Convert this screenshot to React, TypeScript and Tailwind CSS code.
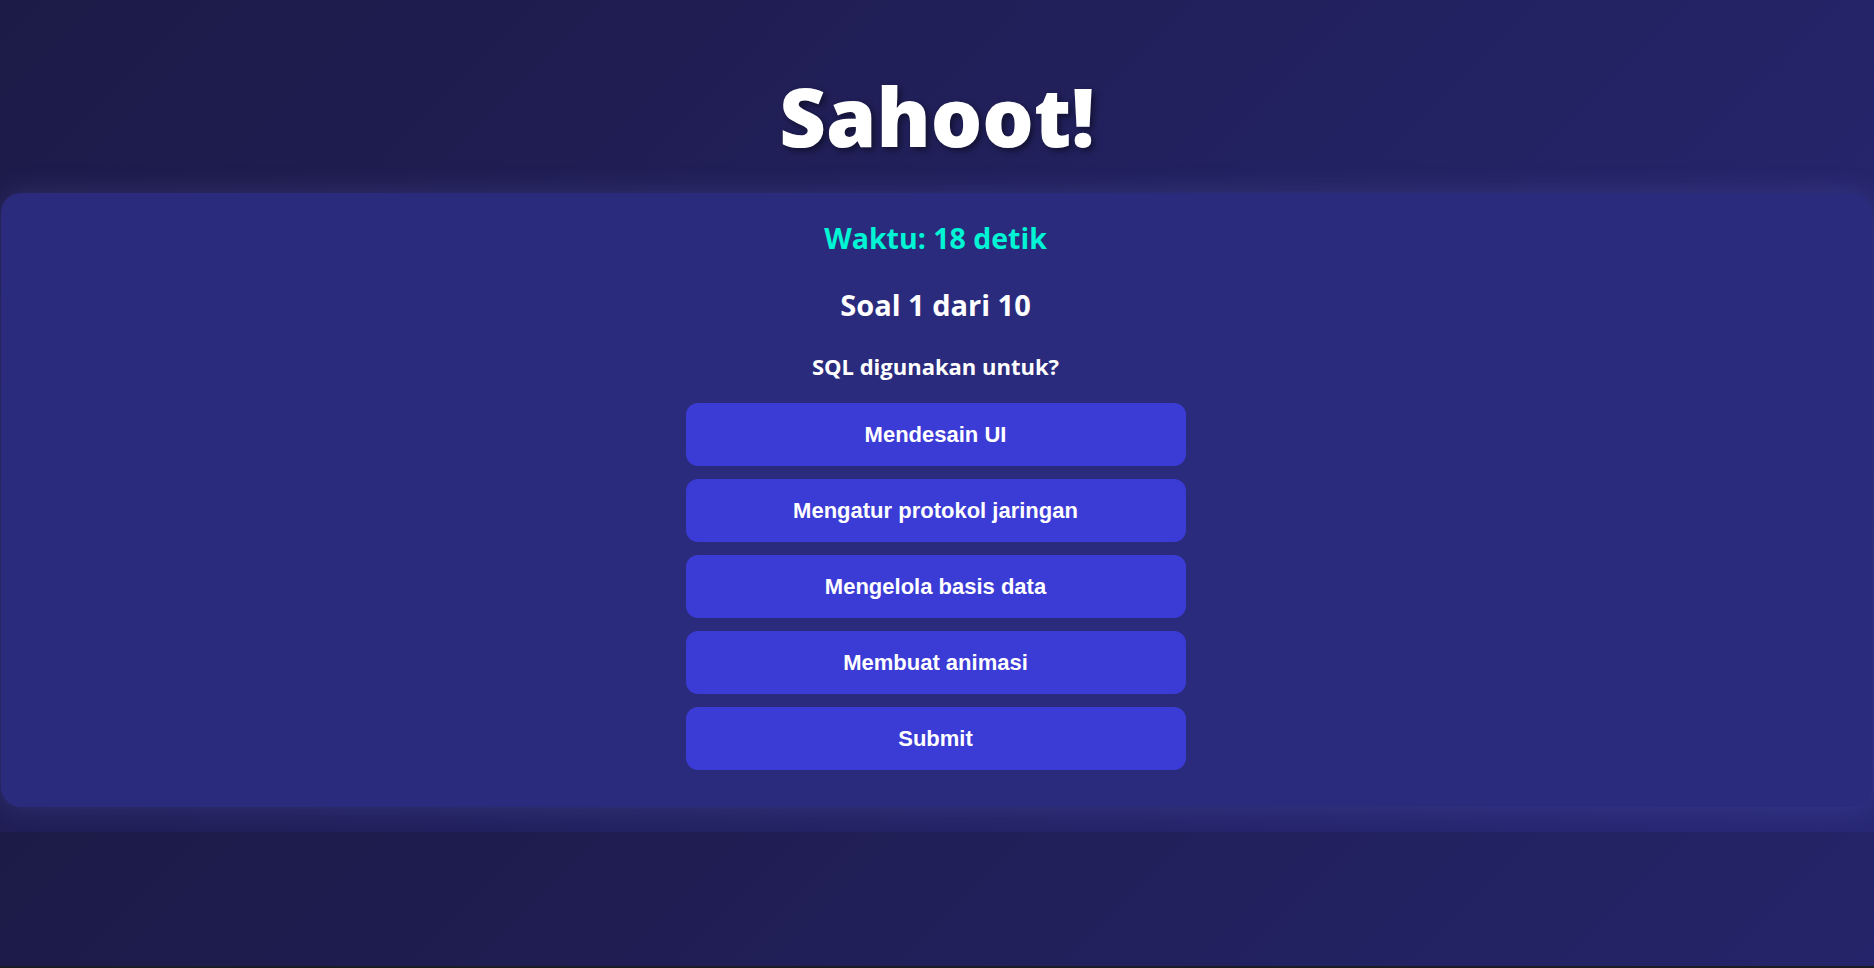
import React from "react";

const options = [
  "Mendesain UI",
  "Mengatur protokol jaringan",
  "Mengelola basis data",
  "Membuat animasi",
];

export default function App() {
  return (
    <div className="w-[1874px] h-[968px] flex flex-col bg-[linear-gradient(135deg,#1c1a46,#282877)] bg-[length:100%_832px] bg-repeat-y">
      <div className="h-[832px] overflow-hidden flex flex-col shrink-0 bg-[linear-gradient(135deg,#1c1a46,#282877)]">
        <h1
          className="mt-[75px] text-center text-white font-extrabold text-[81px] leading-none [text-shadow:3px_3px_6px_rgba(0,0,0,0.45)]"
          style={{ fontFamily: '"Open Sans", "Noto Sans", sans-serif' }}
        >
          Sahoot!
        </h1>
        <div
          className="mt-[37px] ml-[1px] mr-[2px] pr-[2px] rounded-[20px] bg-[#2b2b7d] shadow-[0_0_28px_rgba(140,140,255,0.18)] pt-[31px] pb-[37px] flex flex-col items-center"
          style={{ fontFamily: '"Open Sans", "Noto Sans", sans-serif' }}
        >
          <div className="text-[#00f5d4] font-bold text-[28.5px] leading-none">
            Waktu: 18 detik
          </div>
          <div className="mt-[37px] text-white font-bold text-[29px] leading-none">
            Soal 1 dari 10
          </div>
          <div className="mt-[36px] text-white font-bold text-[22px] leading-none">
            SQL digunakan untuk?
          </div>
          <div className="mt-[26px] flex flex-col gap-[13px] w-[500px]">
            {[...options, "Submit"].map((o) => (
              <button
                key={o}
                className="h-[63px] w-full rounded-[12px] bg-[#3b3bd6] text-white font-bold text-[22px] flex items-center justify-center"
                style={{ fontFamily: '"Liberation Sans", Arial, sans-serif' }}
              >
                {o}
              </button>
            ))}
          </div>
        </div>
      </div>
      <div className="flex-1" />
      <div className="h-[2px] bg-[#1b1d25] shrink-0" />
    </div>
  );
}
